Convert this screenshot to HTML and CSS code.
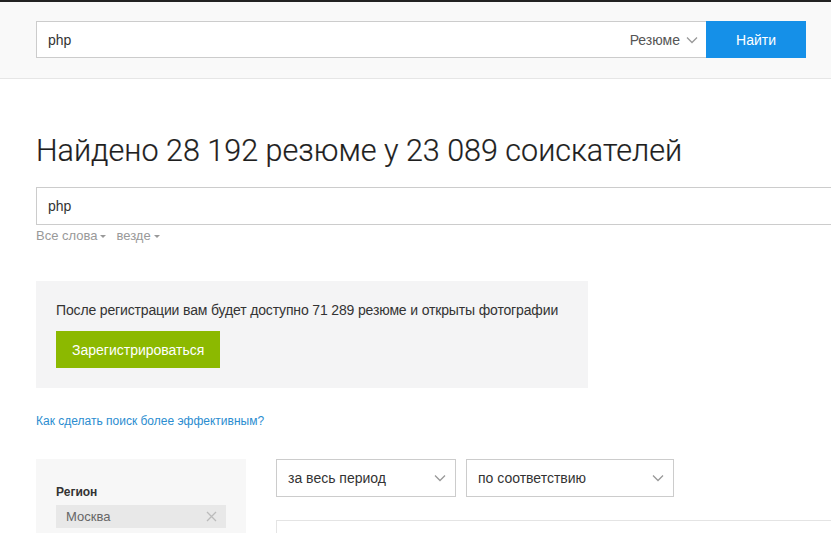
FILE: index.html
```html
<!DOCTYPE html>
<html lang="ru">
<head>
  <meta charset="UTF-8">
  <title>Поиск резюме</title>
  <link rel="stylesheet" href="styles.css">
</head>
<body>
  <div class="header">
    <div class="search-bar">
      <div class="search-field">
        <span class="query">php</span>
        <span class="search-type">Резюме
          <svg class="chevron" width="12" height="8" viewBox="0 0 12 8"><path d="M1 1.5l5 5 5-5" fill="none" stroke="#999" stroke-width="1.3"/></svg>
        </span>
      </div>
      <button class="find-btn">Найти</button>
    </div>
  </div>

  <div class="content">
    <h1>Найдено 28 192 резюме у 23 089 соискателей</h1>
    <div class="query-field">php</div>
    <div class="query-options">
      <span class="opt">Все слова<i class="caret"></i></span>
      <span class="opt">везде<i class="caret"></i></span>
    </div>

    <div class="register-box">
      <p>После регистрации вам будет доступно 71 289 резюме и открыты фотографии</p>
      <button class="register-btn">Зарегистрироваться</button>
    </div>

    <a class="help-link" href="#">Как сделать поиск более эффективным?</a>

    <div class="results">
      <div class="sidebar">
        <div class="filter-title">Регион</div>
        <div class="tag">Москва
          <svg class="tag-close" width="11" height="11" viewBox="0 0 11 11"><path d="M1 1l9 9M10 1l-9 9" stroke="#bbb" stroke-width="1.3"/></svg>
        </div>
      </div>
      <div class="main">
        <div class="sorts">
          <div class="select period">за весь период
            <svg width="12" height="8" viewBox="0 0 12 8"><path d="M1 1.5l5 5 5-5" fill="none" stroke="#999" stroke-width="1.3"/></svg>
          </div>
          <div class="select order">по соответствию
            <svg width="12" height="8" viewBox="0 0 12 8"><path d="M1 1.5l5 5 5-5" fill="none" stroke="#999" stroke-width="1.3"/></svg>
          </div>
        </div>
        <div class="result-card"></div>
      </div>
    </div>
  </div>
</body>
</html>
```

FILE: styles.css
```css
body {
  margin: 0;
  font-family: 'Liberation Sans', Arial, sans-serif;
  color: #333;
  background: #fff;
  overflow: hidden;
}
.header {
  border-top: 2px solid #222;
  background-color: #f9f9f9;
  border-bottom: 1px solid #e6e6e6;
  padding: 19px 0 20px 36px;
}
.search-bar {
  display: flex;
  height: 37px;
}
.search-field {
  width: 670px;
  box-sizing: border-box;
  background: #fff;
  border: 1px solid #ccc;
  border-right: none;
  display: flex;
  align-items: center;
  justify-content: space-between;
  padding: 0 8px 0 11px;
  font-size: 14px;
}
.search-type {
  display: flex;
  align-items: center;
  gap: 6px;
  color: #555;
}
.find-btn {
  width: 100px;
  border: none;
  background-color: #1590e8;
  color: #fff;
  font-family: inherit;
  font-size: 14px;
}
.content {
  padding-left: 36px;
}
h1 {
  margin: 52px 0 0;
  font-family: Roboto, 'Liberation Sans', sans-serif;
  font-size: 30.5px;
  font-weight: 300;
  line-height: 40px;
  color: #1e1e1e;
  -webkit-text-stroke: 0.2px #1e1e1e;
}
.query-field {
  margin-top: 16px;
  height: 38px;
  border: 1px solid #ccc;
  border-right: none;
  box-sizing: border-box;
  padding: 0 11px;
  display: flex;
  align-items: center;
  font-size: 14px;
}
.query-options {
  margin-top: 3px;
  font-size: 13px;
  color: #999;
  display: flex;
  gap: 10px;
}
.caret {
  display: inline-block;
  margin-left: 3px;
  vertical-align: middle;
  border-left: 3px solid transparent;
  border-right: 3px solid transparent;
  border-top: 3px solid #999;
}
.register-box {
  margin-top: 38px;
  width: 552px;
  background-color: #f4f4f5;
  padding: 21px 20px 20px;
  box-sizing: border-box;
}
.register-box p {
  margin: 0 0 13px;
  font-size: 14px;
  color: #333;
  white-space: nowrap;
  letter-spacing: -0.15px;
}
.register-btn {
  border: none;
  background-color: #8cb900;
  color: #fff;
  font-family: inherit;
  font-size: 14px;
  height: 37px;
  padding: 0 16px;
}
.help-link {
  display: block;
  margin-top: 26px;
  font-size: 12px;
  color: #2b8dd0;
  text-decoration: none;
}
.results {
  display: flex;
  gap: 30px;
  margin-top: 31px;
}
.sidebar {
  width: 210px;
  height: 120px;
  background-color: #f7f7f7;
  padding: 26px 20px;
  box-sizing: border-box;
}
.filter-title {
  font-size: 12px;
  font-weight: bold;
  color: #333;
  margin-bottom: 6px;
}
.tag {
  height: 23px;
  background-color: #e8e8e8;
  display: flex;
  align-items: center;
  justify-content: space-between;
  padding: 0 9px 0 10px;
  font-size: 13px;
  color: #666;
}
.main {
  flex: 1;
}
.sorts {
  display: flex;
  gap: 10px;
}
.select {
  height: 38px;
  box-sizing: border-box;
  border: 1px solid #ccc;
  display: flex;
  align-items: center;
  justify-content: space-between;
  padding: 0 9px 0 11px;
  font-size: 14px;
  color: #333;
}
.period {
  width: 180px;
}
.order {
  width: 208px;
}
.result-card {
  margin-top: 23px;
  height: 60px;
  border: 1px solid #e4e4e4;
  border-right: none;
}
```
